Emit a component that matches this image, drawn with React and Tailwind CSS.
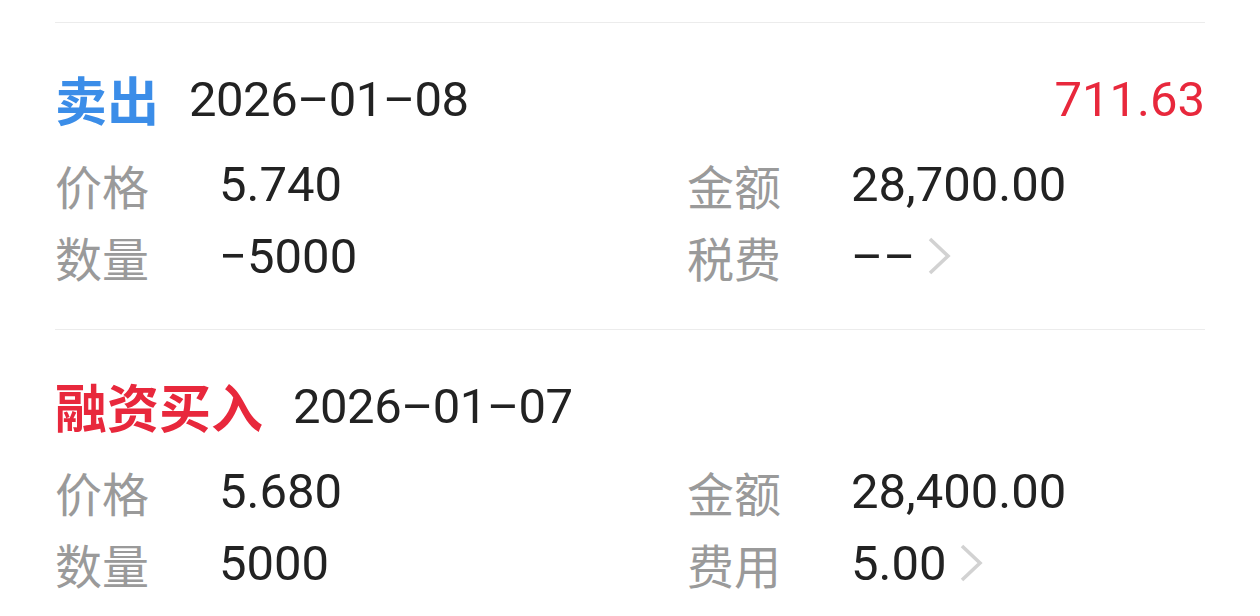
const trades = [
  {
    side: "卖出",
    sideColor: "text-[#3b8de8]",
    date: "2026–01–08",
    profit: "711.63",
    price: "5.740",
    qty: "−5000",
    amount: "28,700.00",
    feeLabel: "税费",
    fee: "––",
  },
  {
    side: "融资买入",
    sideColor: "text-[#e8283c]",
    date: "2026–01–07",
    profit: "",
    price: "5.680",
    qty: "5000",
    amount: "28,400.00",
    feeLabel: "费用",
    fee: "5.00",
  },
];

function Chevron() {
  return (
    <svg width="24" height="40" viewBox="0 0 24 40" className="ml-[12px] shrink-0">
      <polyline points="3,3 21,20 3,37" fill="none" stroke="#d2d2d2" strokeWidth="3.6" />
    </svg>
  );
}

function Field({ label, value, arrow }) {
  return (
    <div className="flex h-[72px] items-center">
      <span className="w-[164px] shrink-0 text-[47px] text-[#9a9a9a]">{label}</span>
      <span className="font-['Roboto','Noto_Sans_CJK_SC',sans-serif] text-[49px] text-[#222222]">{value}</span>
      {arrow && <Chevron />}
    </div>
  );
}

function TradeRow({ trade }) {
  return (
    <section className="border-t border-[#ececec] pt-[44px] pb-[37px]">
      <div className="flex h-16 items-center justify-between">
        <div className="flex items-center">
          <span className={`text-[52px] font-bold ${trade.sideColor}`}>{trade.side}</span>
          <span className="ml-[30px] font-['Roboto','Noto_Sans_CJK_SC',sans-serif] text-[49px] tracking-[-0.5px] text-[#222222]">{trade.date}</span>
        </div>
        {trade.profit && (
          <span className="font-['Roboto',sans-serif] text-[49px] text-[#e8283c]">{trade.profit}</span>
        )}
      </div>
      <div className="mt-[17px] flex">
        <div className="w-[632px] shrink-0">
          <Field label="价格" value={trade.price} />
          <Field label="数量" value={trade.qty} />
        </div>
        <div className="flex-1">
          <Field label="金额" value={trade.amount} />
          <Field label={trade.feeLabel} value={trade.fee} arrow />
        </div>
      </div>
    </section>
  );
}

export default function App() {
  return (
    <div className="h-[616px] w-[1260px] overflow-hidden bg-white px-[55px] pt-[22px] font-['Noto_Sans_CJK_SC',sans-serif] leading-none">
      {trades.map((trade) => (
        <TradeRow key={trade.date} trade={trade} />
      ))}
    </div>
  );
}
